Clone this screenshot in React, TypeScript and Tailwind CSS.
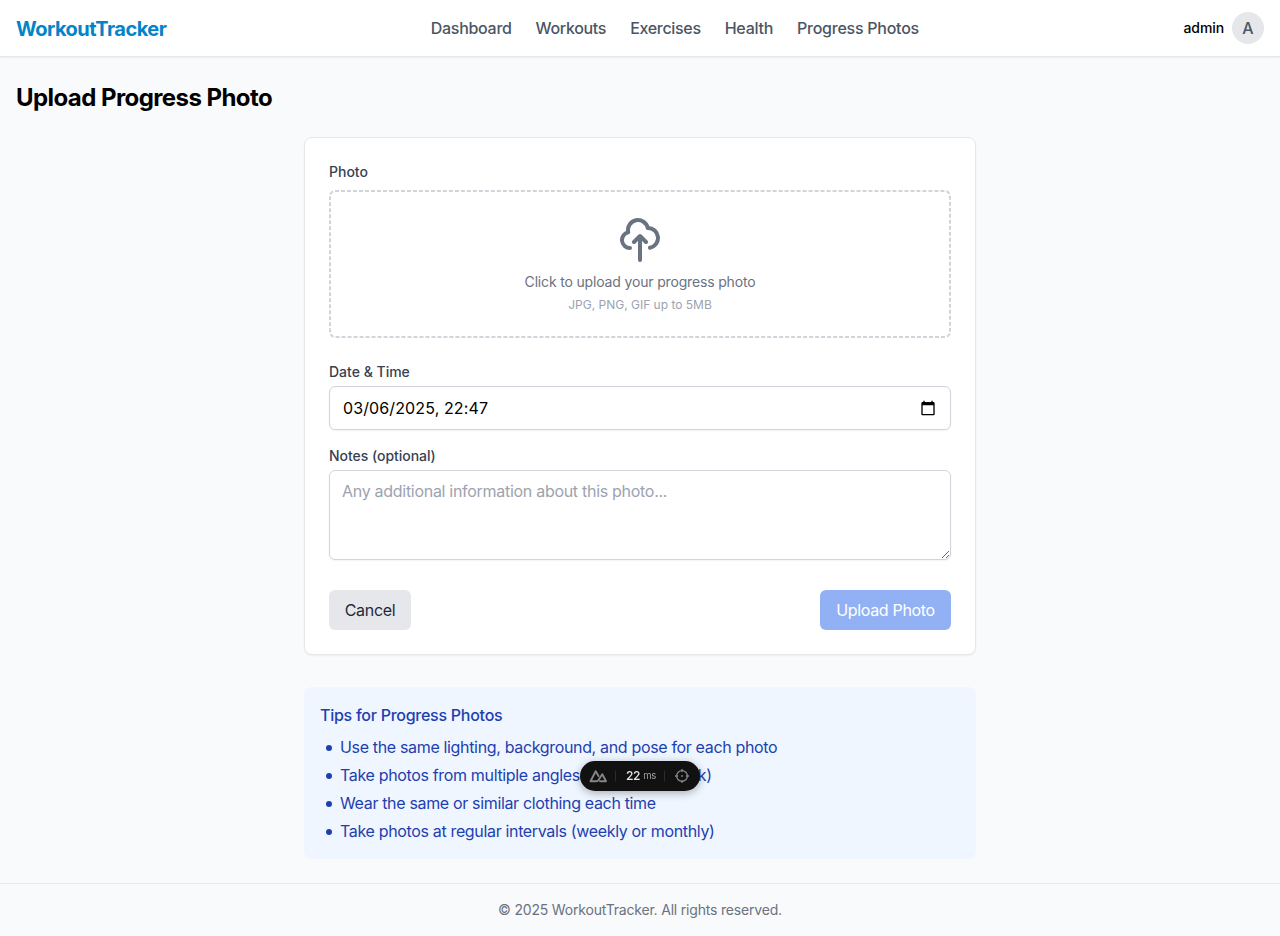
import React from "react";

const navItems = [
  { label: "Dashboard", style: "tracking-[-0.3px]" },
  { label: "Workouts", style: "tracking-[-0.32px]" },
  { label: "Exercises", style: "tracking-[-0.32px]" },
  { label: "Health", style: "tracking-[-0.26px]" },
  { label: "Progress Photos", style: "tracking-[-0.25px]" },
];

const tips = [
  "Use the same lighting, background, and pose for each photo",
  "Take photos from multiple angles (front, side, back)",
  "Wear the same or similar clothing each time",
  "Take photos at regular intervals (weekly or monthly)",
];

function Header() {
  return (
    <header className="relative border-b border-[#e5e7eb] bg-white shadow-[0_1px_2px_rgba(0,0,0,0.05)]">
      <div className="flex h-14 items-center justify-between px-4">
        <a className="pt-0.5 text-xl font-bold tracking-[-0.53px] text-[#0284c7]">WorkoutTracker</a>
        <nav className="flex gap-6 font-medium text-[#4b5563]">
          {navItems.map((n) => (
            <a key={n.label} className={n.style}>
              {n.label}
            </a>
          ))}
        </nav>
        <div className="flex items-center gap-2">
          <span className="text-sm font-medium tracking-[-0.1px] text-black">admin</span>
          <span className="flex size-8 items-center justify-center rounded-full bg-[#e5e7eb] font-[450] text-[#4b5563]">
            A
          </span>
        </div>
      </div>
    </header>
  );
}

function UploadForm() {
  return (
    <form className="rounded-lg border border-[#e5e7eb] bg-white p-6 shadow-[0_1px_2px_rgba(0,0,0,0.05)]">
      <label className="mb-2 block text-sm font-medium text-[#374151]">Photo</label>
      <div className="relative mb-6 flex flex-col items-center rounded-md p-[26px]">
        <svg className="pointer-events-none absolute inset-0 size-full" viewBox="0 0 622 148" fill="none">
          <rect x="1" y="1" width="620" height="146" rx="5" pathLength={1524} stroke="#d1d5db" strokeWidth="2" strokeDasharray="4 2" />
        </svg>
        <svg className="size-12 text-[#6b7280]" viewBox="0 0 24 24" fill="none" stroke="currentColor" strokeWidth="2" strokeLinecap="round" strokeLinejoin="round">
          <path d="M7 16a4 4 0 01-.88-7.903A5 5 0 1115.9 6L16 6a5 5 0 011 9.9M15 13l-3-3m0 0l-3 3m3-3v12" />
        </svg>
        <p className="mt-2 text-sm tracking-[-0.165px] text-[#6b7280]">Click to upload your progress photo</p>
        <p className="mt-[5px] -mb-px text-xs text-[#9ca3af]">JPG, PNG, GIF up to 5MB</p>
      </div>

      <label className="mb-1 block text-sm font-medium text-[#374151]">Date &amp; Time</label>
      <div className="mb-4 flex h-11 items-center justify-between rounded-md border border-[#d1d5db] pr-[14px] pl-[13px] shadow-[0_1px_2px_rgba(0,0,0,0.05)]">
        <span className="tracking-[0.12px] text-black">03/06/2025, 22:47</span>
        <svg className="mb-px size-4" viewBox="0 0 24 24">
          <path d="M20 3h-1V1h-2v2H7V1H5v2H4c-1.1 0-2 .9-2 2v16c0 1.100.9 2 2 2h16c1.100 0 2-.9 2-2V5c0-1.100-.9-2-2-2zm0 18H4V8h16v13z" />
        </svg>
      </div>

      <label className="mb-1 block text-sm font-medium tracking-[-0.03px] text-[#374151]">Notes (optional)</label>
      <textarea
        rows={3}
        placeholder="Any additional information about this photo..."
        className="mb-[30px] block h-[90px] w-full rounded-md border border-[#d1d5db] px-3 py-2 tracking-[-0.29px] shadow-[0_1px_2px_rgba(0,0,0,0.05)] placeholder:text-[#9ca3af]"
      />

      <div className="flex justify-between">
        <button type="button" className="h-10 w-[82px] rounded-md bg-[#e5e7eb] tracking-[-0.33px] text-[#1f2937]">
          Cancel
        </button>
        <button type="button" className="h-10 w-[131px] rounded-md bg-[#92b1f5] tracking-[-0.33px] text-white">
          Upload Photo
        </button>
      </div>
    </form>
  );
}

function Tips() {
  return (
    <section className="mt-8 rounded-lg bg-[#eff6ff] p-4 text-[#1e40af]">
      <h3 className="mb-2 font-medium tracking-[-0.26px]">Tips for Progress Photos</h3>
      <ul className="space-y-1 tracking-[-0.34px]">
        {tips.map((t) => (
          <li key={t} className="flex items-center">
            <span className="mt-0.5 mr-[8.3px] ml-[6.3px] size-[5.4px] rounded-full bg-[#1e40af]" />
            <span>{t}</span>
          </li>
        ))}
      </ul>
    </section>
  );
}

function DevPill() {
  return (
    <div className="fixed top-[761px] left-[580px] flex h-[30px] w-[120px] items-center rounded-full bg-[#111] shadow-[0_2px_8px_rgba(0,0,0,0.3)]">
      <svg className="ml-[9px] h-[14px] w-[19px]" viewBox="0 0 19 14" fill="none" stroke="#858585" strokeWidth="1.9" strokeLinejoin="round" strokeLinecap="round">
        <path d="M11 12.200H17L13.300 5.200L9.300 11.200Q8.700 12.200 7.500 12.200H1.500L6.700 2.200L9.500 7" />
      </svg>
      <span className="ml-[7px] h-[10px] w-px bg-[#2c2c2c]" />
      <span className="ml-[10px] text-xs font-medium tracking-[-0.3px] text-[#e8e8e8]">22</span>
      <span className="ml-[3px] text-[9.5px] tracking-[-0.2px] text-[#a0a0a0]">ms</span>
      <span className="ml-2 h-[10px] w-px bg-[#2c2c2c]" />
      <svg className="ml-[9px] size-4" viewBox="0 0 16 16" fill="none" stroke="#858585" strokeWidth="1.3">
        <circle cx="8" cy="8" r="5.400" />
        <path d="M8 1v3M8 12v3M1 8h3M12 8h3" />
        <circle cx="8" cy="8" r="0.900" fill="#858585" stroke="none" />
      </svg>
    </div>
  );
}

export default function App() {
  return (
    <div className="flex min-h-[936px] flex-col bg-[#f9fafb] font-['Inter','Liberation_Sans',sans-serif] text-base text-black">
      <Header />
      <main className="flex-1 px-4 pt-[25px] pb-6">
        <h1 className="mb-[23px] text-2xl font-bold tracking-[-0.57px]">Upload Progress Photo</h1>
        <div className="mx-auto max-w-2xl">
          <UploadForm />
          <Tips />
        </div>
      </main>
      <footer className="border-t border-[#e5e7eb] py-4 text-center text-sm tracking-[-0.19px] text-[#6b7280]">
        <p>© 2025 WorkoutTracker. All rights reserved.</p>
      </footer>
      <DevPill />
    </div>
  );
}
